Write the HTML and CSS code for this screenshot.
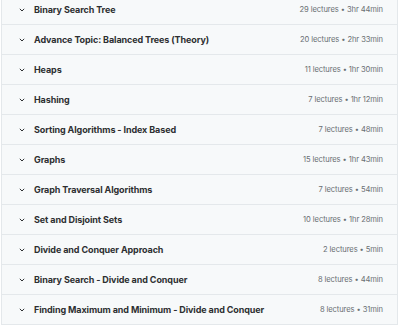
FILE: index.html
```html
<!DOCTYPE html>
<html lang="en">
<head>
  <meta charset="UTF-8" />
  <title>Course content</title>
  <link rel="stylesheet" href="styles.css">
</head>
<body>
  <div class="curriculum">
    <div class="section">
      <span class="chevron"><svg width="6" height="4" viewBox="0 0 6 4"><path d="M0.8 0.8l2.2 2.2 2.2-2.2" fill="none" stroke="#2d2f31" stroke-width="1"/></svg></span>
      <span class="title">Binary Search Tree</span>
      <span class="meta">29 lectures • 3hr 44min</span>
    </div>
    <div class="section">
      <span class="chevron"><svg width="6" height="4" viewBox="0 0 6 4"><path d="M0.8 0.8l2.2 2.2 2.2-2.2" fill="none" stroke="#2d2f31" stroke-width="1"/></svg></span>
      <span class="title">Advance Topic: Balanced Trees (Theory)</span>
      <span class="meta">20 lectures • 2hr 33min</span>
    </div>
    <div class="section">
      <span class="chevron"><svg width="6" height="4" viewBox="0 0 6 4"><path d="M0.8 0.8l2.2 2.2 2.2-2.2" fill="none" stroke="#2d2f31" stroke-width="1"/></svg></span>
      <span class="title">Heaps</span>
      <span class="meta">11 lectures • 1hr 30min</span>
    </div>
    <div class="section">
      <span class="chevron"><svg width="6" height="4" viewBox="0 0 6 4"><path d="M0.8 0.8l2.2 2.2 2.2-2.2" fill="none" stroke="#2d2f31" stroke-width="1"/></svg></span>
      <span class="title">Hashing</span>
      <span class="meta">7 lectures • 1hr 12min</span>
    </div>
    <div class="section">
      <span class="chevron"><svg width="6" height="4" viewBox="0 0 6 4"><path d="M0.8 0.8l2.2 2.2 2.2-2.2" fill="none" stroke="#2d2f31" stroke-width="1"/></svg></span>
      <span class="title">Sorting Algorithms - Index Based</span>
      <span class="meta">7 lectures • 48min</span>
    </div>
    <div class="section">
      <span class="chevron"><svg width="6" height="4" viewBox="0 0 6 4"><path d="M0.8 0.8l2.2 2.2 2.2-2.2" fill="none" stroke="#2d2f31" stroke-width="1"/></svg></span>
      <span class="title">Graphs</span>
      <span class="meta">15 lectures • 1hr 43min</span>
    </div>
    <div class="section">
      <span class="chevron"><svg width="6" height="4" viewBox="0 0 6 4"><path d="M0.8 0.8l2.2 2.2 2.2-2.2" fill="none" stroke="#2d2f31" stroke-width="1"/></svg></span>
      <span class="title">Graph Traversal Algorithms</span>
      <span class="meta">7 lectures • 54min</span>
    </div>
    <div class="section">
      <span class="chevron"><svg width="6" height="4" viewBox="0 0 6 4"><path d="M0.8 0.8l2.2 2.2 2.2-2.2" fill="none" stroke="#2d2f31" stroke-width="1"/></svg></span>
      <span class="title">Set and Disjoint Sets</span>
      <span class="meta">10 lectures • 1hr 28min</span>
    </div>
    <div class="section">
      <span class="chevron"><svg width="6" height="4" viewBox="0 0 6 4"><path d="M0.8 0.8l2.2 2.2 2.2-2.2" fill="none" stroke="#2d2f31" stroke-width="1"/></svg></span>
      <span class="title">Divide and Conquer Approach</span>
      <span class="meta">2 lectures • 5min</span>
    </div>
    <div class="section">
      <span class="chevron"><svg width="6" height="4" viewBox="0 0 6 4"><path d="M0.8 0.8l2.2 2.2 2.2-2.2" fill="none" stroke="#2d2f31" stroke-width="1"/></svg></span>
      <span class="title">Binary Search - Divide and Conquer</span>
      <span class="meta">8 lectures • 44min</span>
    </div>
    <div class="section">
      <span class="chevron"><svg width="6" height="4" viewBox="0 0 6 4"><path d="M0.8 0.8l2.2 2.2 2.2-2.2" fill="none" stroke="#2d2f31" stroke-width="1"/></svg></span>
      <span class="title">Finding Maximum and Minimum - Divide and Conquer</span>
      <span class="meta">8 lectures • 31min</span>
    </div>
  </div>
</body>
</html>
```

FILE: styles.css
```css
body {
  margin: 0;
  background: #ffffff;
  font-family: Inter, "Noto Sans", sans-serif;
  color: #2d2f31;
  overflow: hidden;
}
.curriculum {
  margin: -5px 2px 0 1px;
  border-left: 1px solid #e4e8eb;
  border-right: 1px solid #e4e8eb;
}
.section {
  display: flex;
  align-items: center;
  height: 29px;
  padding: 0 14px 0 17px;
  background: #f7f9fa;
  border-bottom: 1px solid #e4e8eb;
}
.chevron {
  display: flex;
  width: 15px;
}
.title {
  flex: 1;
  font-size: 9px;
  font-weight: 700;
  letter-spacing: -0.1px;
}
.meta {
  font-size: 7.6px;
  letter-spacing: -0.1px;
  color: #6a6f73;
}
```
